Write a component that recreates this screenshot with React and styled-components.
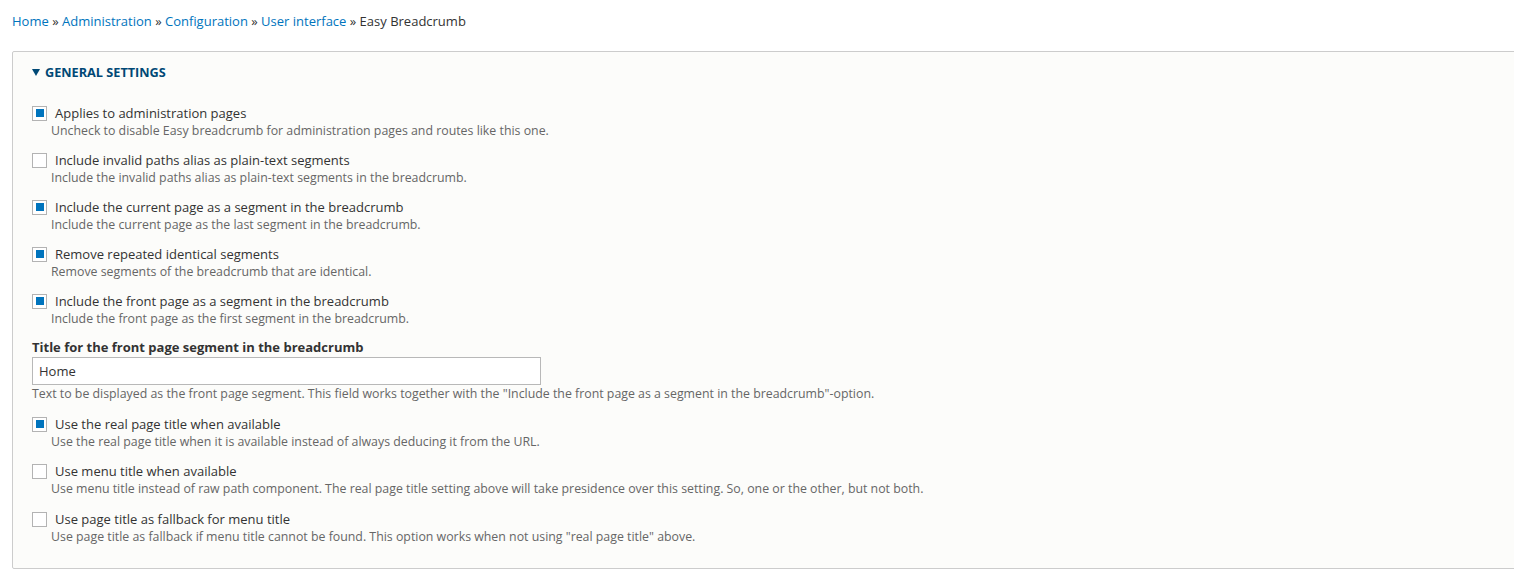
import styled, { createGlobalStyle } from 'styled-components'

const GlobalStyle = createGlobalStyle`
body{
  margin:0;
  background:#fff;
  font-family:"Open Sans","Liberation Sans",sans-serif;
  color:#333;
  overflow:hidden;
}
`;

const Page = styled.div`
padding:12px 0 0 12px;
`;

const Breadcrumb = styled.nav`
font-size:13px;
line-height:18px;
color:#333;
margin-bottom:21px;
white-space:pre;
`;

const Crumb = styled.a`
color:#0074bd;
text-decoration:none;
`;

const Fieldset = styled.section`
border:1px solid #ccc;
border-radius:2px;
background:#fcfcfa;
margin-right:-6px;
padding:11px 0 22px 19px;
`;

const Legend = styled.div`
display:flex;
align-items:center;
gap:5px;
font-size:12.7px;
line-height:18px;
font-weight:700;
text-transform:uppercase;
color:#004875;
margin-bottom:23px;
`;

const Arrow = styled.span`
width:0;
height:0;
border-left:4px solid transparent;
border-right:4px solid transparent;
border-top:7px solid #004875;
margin-top:1px;
`;

const Item = styled.div`
margin-bottom:${p => p.$gap}px;
`;

const CheckRow = styled.label`
display:flex;
align-items:center;
gap:8px;
font-size:13px;
line-height:18px;
color:#333;
`;

const Box = styled.span`
width:13px;
height:13px;
border:1px solid #b3b3b3;
background:#fff;
display:flex;
align-items:center;
justify-content:center;
flex:none;
`;

const Tick = styled.span`
width:8px;
height:8px;
background:#0074bd;
`;

const Description = styled.div`
font-size:12.35px;
line-height:18px;
color:#666;
padding-left:${p => p.$indent ? 19 : 0}px;
white-space:nowrap;
`;

const FieldLabel = styled.div`
font-size:13px;
line-height:18px;
font-weight:700;
color:#333;
margin-bottom:1px;
`;

const TextInput = styled.input`
box-sizing:border-box;
width:509px;
height:28px;
border:1px solid #b8b8b8;
background:#fff;
padding:0 6px;
font-family:inherit;
font-size:13px;
color:#333;
outline:none;
display:block;
`;

const crumbs = ['Home', 'Administration', 'Configuration', 'User interface'];

const before = [
  ['Applies to administration pages', 'Uncheck to disable Easy breadcrumb for administration pages and routes like this one.', true],
  ['Include invalid paths alias as plain-text segments', 'Include the invalid paths alias as plain-text segments in the breadcrumb.', false],
  ['Include the current page as a segment in the breadcrumb', 'Include the current page as the last segment in the breadcrumb.', true],
  ['Remove repeated identical segments', 'Remove segments of the breadcrumb that are identical.', true],
  ['Include the front page as a segment in the breadcrumb', 'Include the front page as the first segment in the breadcrumb.', true],
];

const after = [
  ['Use the real page title when available', 'Use the real page title when it is available instead of always deducing it from the URL.', true],
  ['Use menu title when available', 'Use menu title instead of raw path component. The real page title setting above will take presidence over this setting. So, one or the other, but not both.', false],
  ['Use page title as fallback for menu title', 'Use page title as fallback if menu title cannot be found. This option works when not using "real page title" above.', false],
];

function Checkbox({ label, desc, checked, gap }) {
  return (
    <Item $gap={gap}>
      <CheckRow>
        <Box>{checked && <Tick />}</Box>
        {label}
      </CheckRow>
      <Description $indent>{desc}</Description>
    </Item>
  );
}

export default function App() {
  return (
    <Page>
      <GlobalStyle />
      <Breadcrumb>
        {crumbs.map(c => (
          <span key={c}>
            <Crumb href="#">{c}</Crumb>{' » '}
          </span>
        ))}
        Easy Breadcrumb
      </Breadcrumb>
      <Fieldset>
        <Legend>
          <Arrow />
          General settings
        </Legend>
        {before.map(([l, d, c], i) => (
          <Checkbox key={l} label={l} desc={d} checked={c} gap={i === before.length - 1 ? 10 : 11} />
        ))}
        <Item $gap={12}>
          <FieldLabel>Title for the front page segment in the breadcrumb</FieldLabel>
          <TextInput defaultValue="Home" />
          <Description>Text to be displayed as the front page segment. This field works together with the "Include the front page as a segment in the breadcrumb"-option.</Description>
        </Item>
        {after.map(([l, d, c], i) => (
          <Checkbox key={l} label={l} desc={d} checked={c} gap={i === after.length - 1 ? 0 : (i === 0 ? 11 : 12)} />
        ))}
      </Fieldset>
    </Page>
  );
}
